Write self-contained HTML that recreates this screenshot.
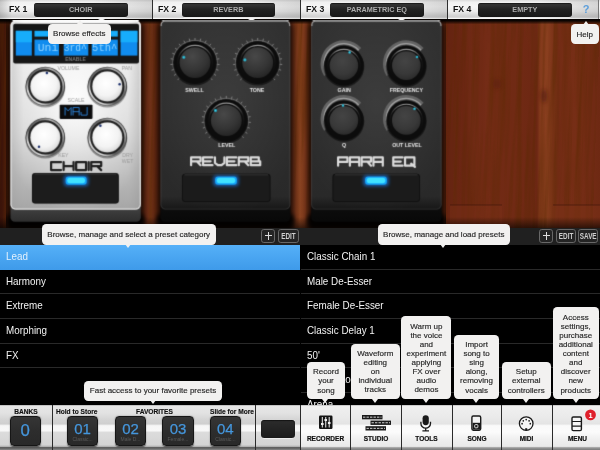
<!DOCTYPE html>
<html><head><meta charset="utf-8">
<style>
*{box-sizing:border-box;margin:0;padding:0}
html,body{width:600px;height:450px;overflow:hidden;background:#000;font-family:"Liberation Sans",sans-serif}
.a{position:absolute}
#wrap{position:absolute;left:0;top:0;width:600px;height:450px;overflow:hidden;will-change:transform;transform:translateZ(0)}
#wood{left:0;top:18px;width:600px;height:210px}
/* top bar */
#top{left:0;top:0;width:600px;height:18.6px;background:linear-gradient(180deg,#dcdcdc 0,#f1f1f1 12%,#f6f6f6 35%,#ececec 60%,#d6d6d6 80%,#cfcfcf 91%,#f4f4f4 95%,#fafafa 100%)}
.sec{top:0;height:18.6px;width:148px;background:linear-gradient(90deg,rgba(0,0,0,0) 0,rgba(0,0,0,0) 60%,rgba(0,0,0,.13) 100%);border-right:1px solid #2e2e2e}
.fx{top:4.3px;font-size:9.1px;transform:scaleX(.955);transform-origin:0 0;font-weight:700;color:#111;line-height:10px;white-space:nowrap}
.fxb{top:2.9px;height:13.8px;width:93.6px;border-radius:3px;background:linear-gradient(180deg,#3a3a3a 0,#222 45%,#181818 100%);color:#adadad;font-size:7.25px;font-weight:700;text-align:center;line-height:13.6px;box-shadow:0 .5px 0 rgba(255,255,255,.8),inset 0 .5px 1px #000}
.nt{top:18.2px;width:7px;height:2px;background:#f4f4f4;border-radius:0 0 2px 2px}
/* tooltips */
.tip{background:#f2f1f0;border-radius:4.2px;color:#262626;font-size:8px;line-height:9.1px;text-align:center;padding:5.6px 0 4.4px;-webkit-text-stroke:.15px #262626;white-space:nowrap}
.ar{width:0;height:0;border-left:3.5px solid transparent;border-right:3.5px solid transparent}
.ard{border-top:4px solid #f2f1f0}
.aru{border-bottom:4px solid #f2f1f0}
/* mid bar */
#mid{left:0;top:227.6px;width:600px;height:17.4px;background:#202020}
.mb{top:229px;height:13.8px;border:1px solid #686868;border-radius:2.8px;color:#cfcfcf;font-size:8.4px;font-weight:700;text-align:center;line-height:12.6px;background:#242424}
.mb span{position:absolute;left:-10px;right:-10px;top:0;transform:scaleX(.76);transform-origin:50% 50%}
.mb i{position:absolute;background:#dcdcdc}
/* lists */
.row{height:24.65px;border-bottom:1px solid #292929;color:#f2f2f2;font-size:10.1px;line-height:24.4px;padding-left:6px;white-space:nowrap}
.row span{display:inline-block;transform:scaleX(.975);transform-origin:0 50%}
/* bottom */
#bl{left:0;top:404.6px;width:300.5px;height:45.4px;background:linear-gradient(180deg,#a8a8a8 0,#e6e6e6 2.5%,#e2e2e2 18%,#d3d3d3 34%,#cfcfcf 42%,#f6f6f6 46%,#f8f8f8 57%,#dcdcdc 61%,#d4d4d4 88%,#bdbdbd 92%,#5e5e5e 94%,#6a6a6a 97%,#8c8c8c 100%)}
#br{left:300.5px;top:404.6px;width:299.5px;height:45.4px;background:linear-gradient(180deg,#b0b0b0 0,#f0f0f0 2.5%,#ebebeb 25%,#e4e4e4 42%,#fafafa 46%,#fbfbfb 60%,#f0f0f0 75%,#e9e9e9 92%,#9a9a9a 95%,#7a7a7a 100%)}
.bt{font-size:6.6px;font-weight:700;color:#111;-webkit-text-stroke:.15px #111;white-space:nowrap;line-height:8px;top:408px}
.pb{top:416px;width:31.4px;height:29.6px;border-radius:4px;background:linear-gradient(180deg,#353535 0,#2d2d2d 50%,#292929 100%);border:.8px solid #161616;box-shadow:0 .8px 1.2px rgba(0,0,0,.6);color:#4596dc;font-size:15px;text-align:center;line-height:24.5px;-webkit-text-stroke:.25px #4596dc}
.pb small{display:block;font-size:5px;color:#5a5a5a;line-height:5px;margin-top:-4.3px;font-weight:400;-webkit-text-stroke:0}
.tl{top:434.6px;width:50px;text-align:center;font-size:6.5px;font-weight:700;color:#111;line-height:8px;-webkit-text-stroke:.2px #111}
.vd{top:404.5px;width:1px;height:45.5px;background:#2a2a2a}
</style></head><body><div id="wrap">
<svg class="a" id="wood" width="600" height="210" viewBox="0 18 600 210">
<defs>
<linearGradient id="wg" x1="0" y1="0" x2="600" y2="0" gradientUnits="userSpaceOnUse">
<stop offset="0" stop-color="#3c1609"/><stop offset=".015" stop-color="#4e1d0c"/><stop offset=".233" stop-color="#702b13"/><stop offset=".251" stop-color="#7e3b1d"/><stop offset=".268" stop-color="#6f2a12"/>
<stop offset=".483" stop-color="#7a3216"/><stop offset=".5" stop-color="#9a4f25"/><stop offset=".519" stop-color="#7e3417"/>
<stop offset=".74" stop-color="#6c2811"/><stop offset=".76" stop-color="#742c14"/><stop offset=".81" stop-color="#7f3217"/><stop offset=".86" stop-color="#7d3116"/><stop offset=".895" stop-color="#782e15"/>
<stop offset=".9" stop-color="#93441f"/><stop offset=".912" stop-color="#9b4a23"/><stop offset=".922" stop-color="#8a3c1b"/><stop offset=".93" stop-color="#803417"/><stop offset=".96" stop-color="#843618"/><stop offset="1" stop-color="#7a3015"/>
</linearGradient>
<filter id="grain" x="0" y="0" width="100%" height="100%"><feTurbulence type="fractalNoise" baseFrequency=".22 .007" numOctaves="3" seed="7"/><feColorMatrix values="0 0 0 0 .12  0 0 0 0 .03  0 0 0 0 0  1.6 0 0 0 -.62"/></filter>
<filter id="grain2" x="0" y="0" width="100%" height="100%"><feTurbulence type="fractalNoise" baseFrequency=".05 .004" numOctaves="2" seed="3"/><feColorMatrix values="0 0 0 0 .75  0 0 0 0 .35  0 0 0 0 .12  1.2 0 0 0 -.62"/></filter>
<linearGradient id="tsh" x1="0" y1="0" x2="0" y2="1"><stop offset="0" stop-color="#050201" stop-opacity="1"/><stop offset=".42" stop-color="#050201" stop-opacity=".95"/><stop offset="1" stop-color="#000" stop-opacity="0"/></linearGradient>
<filter id="wb" x="-50%" y="-50%" width="200%" height="200%"><feGaussianBlur stdDeviation="2"/></filter>
</defs>
<rect x="0" y="18" width="600" height="210" fill="url(#wg)"/>
<rect x="0" y="18" width="600" height="210" filter="url(#grain)" opacity=".8" transform="skewX(-2)"/>
<rect x="0" y="18" width="600" height="210" filter="url(#grain2)" opacity=".08"/>
<!-- lighter lower planks -->
<rect x="450" y="205" width="52" height="23" fill="#8a3a1b" opacity=".4"/><rect x="553" y="205" width="47" height="23" fill="#8c3c1c" opacity=".4"/>
<path d="M450,205H502M553,205H600" stroke="#3a1407" stroke-width=".8" opacity=".7"/>
<ellipse cx="544" cy="96" rx="3" ry="7" fill="#4a180a" opacity=".55" filter="url(#wb)"/>
<ellipse cx="497" cy="84" rx="4" ry="5" fill="#5a1f0d" opacity=".4" filter="url(#wb)"/>
<rect x="0" y="18" width="600" height="210" fill="#30060a" opacity=".16"/>
<rect x="0" y="18" width="600" height="6.4" fill="url(#tsh)"/>
<linearGradient id="bsh" x1="0" y1="0" x2="0" y2="1"><stop offset="0" stop-color="#000" stop-opacity="0"/><stop offset="1" stop-color="#000" stop-opacity=".6"/></linearGradient><rect x="0" y="217" width="600" height="11" fill="url(#bsh)"/>
</svg>
<div class="a" id="top"></div><div class="a sec" style="left:4.9px"></div><div class="a sec" style="left:152.9px"></div><div class="a sec" style="left:300.9px;width:147.6px"></div><div class="a sec" style="left:448.5px;width:150.3px;border-right-color:#777"></div><div class="a" style="left:0;top:0;width:12px;height:18.6px;background:linear-gradient(90deg,rgba(0,0,0,.18),rgba(0,0,0,0))"></div>
<div class="a fx" style="left:8.5px">FX 1</div><div class="a fxb" style="left:34px">CHOIR</div>
<div class="a fx" style="left:157.7px">FX 2</div><div class="a fxb" style="left:181.5px">REVERB</div>
<div class="a fx" style="left:305.7px">FX 3</div><div class="a fxb" style="left:330px">PARAMETRIC EQ</div>
<div class="a fx" style="left:453.3px">FX 4</div><div class="a fxb" style="left:478px">EMPTY</div>
<div class="a" style="left:581px;top:2.5px;width:10px;text-align:center;font-size:11px;font-weight:700;color:#5b9edb;line-height:13px">?</div>


<div id="pedals"><svg class="a" style="left:0;top:19px" width="600" height="209" viewBox="0 19 600 209">
<defs>
<linearGradient id="silv" x1="0" y1="0" x2="0" y2="1"><stop offset="0" stop-color="#f4f4f4"/><stop offset=".25" stop-color="#e6e6e6"/><stop offset=".6" stop-color="#d2d2d2"/><stop offset=".85" stop-color="#b6b6b6"/><stop offset="1" stop-color="#a6a6a6"/></linearGradient>
<radialGradient id="silvh" cx=".5" cy=".42" r=".6"><stop offset="0" stop-color="#fff" stop-opacity=".95"/><stop offset=".55" stop-color="#fff" stop-opacity=".35"/><stop offset="1" stop-color="#fff" stop-opacity="0"/></radialGradient>
<linearGradient id="silvside" x1="0" y1="0" x2="1" y2="0"><stop offset="0" stop-color="#999" stop-opacity=".3"/><stop offset=".1" stop-color="#999" stop-opacity="0"/><stop offset=".9" stop-color="#999" stop-opacity="0"/><stop offset="1" stop-color="#888" stop-opacity=".3"/></linearGradient>
<linearGradient id="dk" x1="0" y1="0" x2="0" y2="1"><stop offset="0" stop-color="#313131"/><stop offset=".5" stop-color="#2d2d2d"/><stop offset=".93" stop-color="#292929"/><stop offset="1" stop-color="#161616"/></linearGradient>
<radialGradient id="dkh" cx=".5" cy=".45" r=".6"><stop offset="0" stop-color="#fff" stop-opacity=".07"/><stop offset="1" stop-color="#fff" stop-opacity="0"/></radialGradient>
<linearGradient id="base" x1="0" y1="0" x2="0" y2="1"><stop offset="0" stop-color="#5a5a5a"/><stop offset=".25" stop-color="#444"/><stop offset="1" stop-color="#2e2e2e"/></linearGradient>
<linearGradient id="based" x1="0" y1="0" x2="0" y2="1"><stop offset="0" stop-color="#141414"/><stop offset=".5" stop-color="#0b0b0b"/><stop offset="1" stop-color="#080808"/></linearGradient>
<radialGradient id="led" cx=".5" cy=".5" r=".5" gradientTransform="translate(.5 .5) scale(1 .55) translate(-.5 -.5)"><stop offset="0" stop-color="#3fe4ff"/><stop offset=".6" stop-color="#16b4fb"/><stop offset="1" stop-color="#0b78e4"/></radialGradient>
<filter id="glow" x="-30%" y="-80%" width="160%" height="260%"><feGaussianBlur stdDeviation="1.6"/></filter>
<filter id="soft" x="0" y="0" width="100%" height="100%" color-interpolation-filters="sRGB"><feConvolveMatrix order="3" kernelMatrix="0.0169 0.0962 0.0169 0.0962 0.5476 0.0962 0.0169 0.0962 0.0169" edgeMode="duplicate" preserveAlpha="false"/></filter>
<filter id="b1" x="-20%" y="-20%" width="140%" height="140%"><feGaussianBlur stdDeviation=".5"/></filter>
<filter id="b2" x="-20%" y="-20%" width="140%" height="140%"><feGaussianBlur stdDeviation="2.2"/></filter>
<filter id="b3" x="-20%" y="-20%" width="140%" height="140%"><feGaussianBlur stdDeviation="3.2"/></filter>
<radialGradient id="wk" cx=".45" cy=".4" r=".6"><stop offset="0" stop-color="#fff"/><stop offset=".7" stop-color="#f3f3f3"/><stop offset="1" stop-color="#dcdcdc"/></radialGradient>
<linearGradient id="chr" x1="1" y1="0" x2="0" y2="1"><stop offset="0" stop-color="#5a5a5a"/><stop offset=".2" stop-color="#b4b4b4"/><stop offset=".36" stop-color="#6a6a6a"/><stop offset=".62" stop-color="#585858"/><stop offset=".8" stop-color="#e0e0e0"/><stop offset="1" stop-color="#6a6a6a"/></linearGradient>
<linearGradient id="chr2" x1="0" y1="0" x2="0" y2="1"><stop offset="0" stop-color="#4a4a4a"/><stop offset=".5" stop-color="#2e2e2e"/><stop offset="1" stop-color="#6a6a6a"/></linearGradient>
<radialGradient id="cap" cx=".42" cy=".3" r=".78"><stop offset="0" stop-color="#484848"/><stop offset=".6" stop-color="#343434"/><stop offset="1" stop-color="#202020"/></radialGradient>
<linearGradient id="rim" x1="0" y1="0" x2="0" y2="1"><stop offset="0" stop-color="#9a9a9a"/><stop offset=".35" stop-color="#333" stop-opacity=".3"/><stop offset="1" stop-color="#000" stop-opacity="0"/></linearGradient>
<radialGradient id="cap2" cx=".45" cy=".35" r=".75"><stop offset="0" stop-color="#444"/><stop offset=".6" stop-color="#383838"/><stop offset="1" stop-color="#262626"/></radialGradient>
<radialGradient id="bd" cx=".5" cy=".5" r=".5"><stop offset="0" stop-color="#4fd4e6"/><stop offset=".5" stop-color="#22a4be"/><stop offset="1" stop-color="#22a4be" stop-opacity="0"/></radialGradient>
</defs><g filter="url(#soft)">
<rect x="8.0" y="21" width="135.3" height="204" rx="6" fill="#000" opacity=".9" filter="url(#b3)"/>
<rect x="6.5" y="214" width="138.3" height="16" rx="5" fill="#000" opacity=".9" filter="url(#b2)"/>
<rect x="158.0" y="21" width="134.8" height="204" rx="6" fill="#000" opacity=".9" filter="url(#b3)"/>
<rect x="156.5" y="214" width="137.8" height="16" rx="5" fill="#000" opacity=".9" filter="url(#b2)"/>
<rect x="308.7" y="21" width="135.40000000000003" height="204" rx="6" fill="#000" opacity=".9" filter="url(#b3)"/>
<rect x="307.2" y="214" width="138.40000000000003" height="16" rx="5" fill="#000" opacity=".9" filter="url(#b2)"/>
<rect x="10.5" y="200" width="130.3" height="21.7" rx="4.5" fill="url(#base)"/>
<rect x="10.5" y="20.6" width="130.3" height="189" rx="5" fill="url(#silv)"/>
<rect x="10.5" y="20.6" width="130.3" height="189" rx="5" fill="url(#silvh)"/>
<rect x="10.5" y="20.6" width="130.3" height="189" rx="5" fill="url(#silvside)"/>
<rect x="11.0" y="21.1" width="129.3" height="188" rx="4.6" fill="none" stroke="#fff" stroke-opacity=".85" stroke-width="1"/>
<rect x="13.2" y="23.8" width="125.8" height="39.7" rx="2" fill="#161616"/>
<rect x="15.8" y="30.8" width="16.0" height="24.8" fill="#108cee"/>
<rect x="15.8" y="30.8" width="16.0" height="11.5" fill="#17adfb"/>
<rect x="34.5" y="30.8" width="24.5" height="5.8" fill="#17adfb"/>
<rect x="34.5" y="39.6" width="24.5" height="16" fill="#108cee"/>
<rect x="63.7" y="30.8" width="24.599999999999994" height="5.8" fill="#17adfb"/>
<rect x="63.7" y="39.6" width="24.599999999999994" height="16" fill="#108cee"/>
<rect x="91.7" y="30.8" width="26.099999999999994" height="5.8" fill="#17adfb"/>
<rect x="91.7" y="39.6" width="26.099999999999994" height="16" fill="#108cee"/>
<rect x="120.6" y="30.8" width="16.80000000000001" height="24.8" fill="#108cee"/>
<rect x="120.6" y="30.8" width="16.80000000000001" height="11.5" fill="#17adfb"/>
<g font-family="Liberation Mono" font-size="10.6" fill="#8dd2ff" text-anchor="middle"><text x="48" y="51.4" textLength="20.5" lengthAdjust="spacingAndGlyphs">Uni</text><text x="75.2" y="51.4" textLength="23" lengthAdjust="spacingAndGlyphs">3rd^</text><text x="104.7" y="51.4" textLength="25.2" lengthAdjust="spacingAndGlyphs">5th^</text></g>
<text x="75.5" y="61" font-family="Liberation Sans" font-size="5" font-weight="700" fill="#7d7d7d" text-anchor="middle">ENABLE</text>
<text x="68.4" y="70.2" font-family="Liberation Sans" font-size="5.2" font-weight="400" fill="#9a9a9a" text-anchor="middle">VOLUME</text>
<text x="126.8" y="70.2" font-family="Liberation Sans" font-size="5.2" font-weight="400" fill="#9a9a9a" text-anchor="middle">PAN</text>
<text x="76" y="101.8" font-family="Liberation Sans" font-size="5.2" font-weight="400" fill="#9a9a9a" text-anchor="middle">SCALE</text>
<text x="63.4" y="157.3" font-family="Liberation Sans" font-size="5.2" font-weight="400" fill="#9a9a9a" text-anchor="middle">KEY</text>
<text x="127.6" y="157.3" font-family="Liberation Sans" font-size="5.2" font-weight="400" fill="#9a9a9a" text-anchor="middle">DRY</text>
<text x="127.6" y="163.2" font-family="Liberation Sans" font-size="5.2" font-weight="400" fill="#9a9a9a" text-anchor="middle">WET</text>
<rect x="59.7" y="104.7" width="32.8" height="14.2" rx=".8" fill="#0b0b0c"/>
<g fill="none" stroke="#2b7ed2" stroke-width="0.95" stroke-linejoin="round" stroke-linecap="round" vector-effect="non-scaling-stroke"><path vector-effect="non-scaling-stroke" transform="translate(65.07,107.47) scale(0.606,0.765)" d="M0,10V0L5,4.5L10,0V10"/><path vector-effect="non-scaling-stroke" transform="translate(73.07,107.47) scale(0.606,0.765)" d="M0,10V0H10V10M0,5.5H10"/><path vector-effect="non-scaling-stroke" transform="translate(81.07,107.47) scale(0.606,0.765)" d="M10,0V10H0V6.5"/></g>
<circle cx="45.3" cy="87.60000000000001" r="20" fill="#000" opacity=".35" filter="url(#b1)"/><circle cx="45.3" cy="86.4" r="19.7" fill="url(#chr2)"/><circle cx="45.3" cy="86.4" r="18.9" fill="url(#chr)"/><circle cx="45.3" cy="86.4" r="17.1" fill="#1e1e1e"/><circle cx="45.3" cy="86.4" r="15.5" fill="#444"/><circle cx="45.3" cy="86.4" r="14.9" fill="url(#wk)"/><circle cx="46.9" cy="72.9" r="1.25" fill="#1b2f6b"/>
<circle cx="107.3" cy="87.60000000000001" r="20" fill="#000" opacity=".35" filter="url(#b1)"/><circle cx="107.3" cy="86.4" r="19.7" fill="url(#chr2)"/><circle cx="107.3" cy="86.4" r="18.9" fill="url(#chr)"/><circle cx="107.3" cy="86.4" r="17.1" fill="#1e1e1e"/><circle cx="107.3" cy="86.4" r="15.5" fill="#444"/><circle cx="107.3" cy="86.4" r="14.9" fill="url(#wk)"/><circle cx="119.6" cy="84.2" r="1.25" fill="#1b2f6b"/>
<circle cx="45.3" cy="138.6" r="20" fill="#000" opacity=".35" filter="url(#b1)"/><circle cx="45.3" cy="137.4" r="19.7" fill="url(#chr2)"/><circle cx="45.3" cy="137.4" r="18.9" fill="url(#chr)"/><circle cx="45.3" cy="137.4" r="17.1" fill="#1e1e1e"/><circle cx="45.3" cy="137.4" r="15.5" fill="#444"/><circle cx="45.3" cy="137.4" r="14.9" fill="url(#wk)"/><circle cx="39" cy="146.7" r="1.25" fill="#1b2f6b"/>
<circle cx="107.3" cy="138.6" r="20" fill="#000" opacity=".35" filter="url(#b1)"/><circle cx="107.3" cy="137.4" r="19.7" fill="url(#chr2)"/><circle cx="107.3" cy="137.4" r="18.9" fill="url(#chr)"/><circle cx="107.3" cy="137.4" r="17.1" fill="#1e1e1e"/><circle cx="107.3" cy="137.4" r="15.5" fill="#444"/><circle cx="107.3" cy="137.4" r="14.9" fill="url(#wk)"/><circle cx="100.4" cy="125.8" r="1.25" fill="#1b2f6b"/>
<g fill="none" stroke="#1e1e1e" stroke-width="2.2" stroke-linejoin="round" stroke-linecap="round" vector-effect="non-scaling-stroke"><path vector-effect="non-scaling-stroke" transform="translate(51.10,162.10) scale(0.994,0.800)" d="M10,0H0V10H10"/><path vector-effect="non-scaling-stroke" transform="translate(63.62,162.10) scale(0.994,0.800)" d="M0,0V10M10,0V10M0,5H10"/><path vector-effect="non-scaling-stroke" transform="translate(76.15,162.10) scale(0.994,0.800)" d="M0,0H10V10H0Z"/><path vector-effect="non-scaling-stroke" transform="translate(88.68,162.10) scale(0.994,0.800)" d="M0,0V10"/><path vector-effect="non-scaling-stroke" transform="translate(91.26,162.10) scale(0.994,0.800)" d="M0,10V0H10V5H0M6,5L10,10"/></g>
<rect x="32" y="173" width="86.8" height="30.5" rx="3" fill="#1c1c1c"/><rect x="32.4" y="173.4" width="86.0" height="29.7" rx="2.8" fill="none" stroke="#000" stroke-opacity=".5" stroke-width=".8"/><path d="M34.5,174.1H116.3" stroke="#fff" stroke-opacity=".13" stroke-width="1"/><rect x="63.5" y="175" width="25.299999999999997" height="11.4" rx="4" fill="#1277e6" opacity=".6" filter="url(#glow)"/><rect x="65.6" y="176.6" width="21.099999999999998" height="8.2" rx="3" fill="#14a2f8" filter="url(#b1)"/><rect x="67.2" y="177.8" width="17.9" height="5.4" rx="2.6" fill="#3fe2ff" filter="url(#b1)"/>
<rect x="160.5" y="200" width="129.8" height="21.7" rx="4.5" fill="url(#based)"/><rect x="160.5" y="20.6" width="129.8" height="189" rx="5" fill="url(#dk)"/><rect x="160.5" y="20.6" width="129.8" height="189" rx="5" fill="url(#dkh)"/><rect x="160.9" y="21" width="129.0" height="188.2" rx="4.7" fill="none" stroke="#fff" stroke-opacity=".13" stroke-width=".8"/><path d="M161.2,26V24.6a3.4,3.4 0 0 1 3.4,-3.4H286.2a3.4,3.4 0 0 1 3.4,3.4V26" stroke="#ddd" stroke-opacity=".6" stroke-width="1.2" fill="none"/>
<path d="M179.80,77.80L177.61,79.99M176.67,73.83L174.03,75.45M174.55,69.24L171.60,70.20M173.57,64.29L170.48,64.53M173.76,59.24L170.70,58.75M175.14,54.37L172.27,53.19M177.61,49.96L175.10,48.14M181.04,46.25L179.02,43.89M185.24,43.44L183.83,40.68M189.98,41.69L189.26,38.68M195.00,41.10L195.00,38.00M200.02,41.69L200.74,38.68M204.76,43.44L206.17,40.68M208.96,46.25L210.98,43.89M212.39,49.96L214.90,48.14M214.86,54.37L217.73,53.19M216.24,59.24L219.30,58.75M216.43,64.29L219.52,64.53M215.45,69.24L218.40,70.20M213.33,73.83L215.97,75.45M210.20,77.80L212.39,79.99" stroke="#8c8c8c" stroke-width=".85" fill="none"/><path d="M179.23,78.37A22.3,22.3 0 1 1 210.77,78.37" stroke="#6a6a6a" stroke-width=".9" fill="none"/><circle cx="195" cy="63.6" r="22" fill="#000" opacity=".5" filter="url(#b1)"/><circle cx="195" cy="62.6" r="21.3" fill="#0c0c0c"/><circle cx="195" cy="62.6" r="17.3" fill="none" stroke="url(#rim)" stroke-width="1.3"/><circle cx="195" cy="62.6" r="15.4" fill="url(#cap)"/><circle cx="183.8" cy="57.3" r="2.1" fill="url(#bd)"/>
<path d="M242.50,77.80L240.31,79.99M239.37,73.83L236.73,75.45M237.25,69.24L234.30,70.20M236.27,64.29L233.18,64.53M236.46,59.24L233.40,58.75M237.84,54.37L234.97,53.19M240.31,49.96L237.80,48.14M243.74,46.25L241.72,43.89M247.94,43.44L246.53,40.68M252.68,41.69L251.96,38.68M257.70,41.10L257.70,38.00M262.72,41.69L263.44,38.68M267.46,43.44L268.87,40.68M271.66,46.25L273.68,43.89M275.09,49.96L277.60,48.14M277.56,54.37L280.43,53.19M278.94,59.24L282.00,58.75M279.13,64.29L282.22,64.53M278.15,69.24L281.10,70.20M276.03,73.83L278.67,75.45M272.90,77.80L275.09,79.99" stroke="#8c8c8c" stroke-width=".85" fill="none"/><path d="M241.93,78.37A22.3,22.3 0 1 1 273.47,78.37" stroke="#6a6a6a" stroke-width=".9" fill="none"/><circle cx="257.7" cy="63.6" r="22" fill="#000" opacity=".5" filter="url(#b1)"/><circle cx="257.7" cy="62.6" r="21.3" fill="#0c0c0c"/><circle cx="257.7" cy="62.6" r="17.3" fill="none" stroke="url(#rim)" stroke-width="1.3"/><circle cx="257.7" cy="62.6" r="15.4" fill="url(#cap)"/><circle cx="244.9" cy="59.9" r="2.1" fill="url(#bd)"/>
<path d="M211.10,135.70L208.91,137.89M207.97,131.73L205.33,133.35M205.85,127.14L202.90,128.10M204.87,122.19L201.78,122.43M205.06,117.14L202.00,116.65M206.44,112.27L203.57,111.09M208.91,107.86L206.40,106.04M212.34,104.15L210.32,101.79M216.54,101.34L215.13,98.58M221.28,99.59L220.56,96.58M226.30,99.00L226.30,95.90M231.32,99.59L232.04,96.58M236.06,101.34L237.47,98.58M240.26,104.15L242.28,101.79M243.69,107.86L246.20,106.04M246.16,112.27L249.03,111.09M247.54,117.14L250.60,116.65M247.73,122.19L250.82,122.43M246.75,127.14L249.70,128.10M244.63,131.73L247.27,133.35M241.50,135.70L243.69,137.89" stroke="#8c8c8c" stroke-width=".85" fill="none"/><path d="M210.53,136.27A22.3,22.3 0 1 1 242.07,136.27" stroke="#6a6a6a" stroke-width=".9" fill="none"/><circle cx="226.3" cy="121.5" r="22" fill="#000" opacity=".5" filter="url(#b1)"/><circle cx="226.3" cy="120.5" r="21.3" fill="#0c0c0c"/><circle cx="226.3" cy="120.5" r="17.3" fill="none" stroke="url(#rim)" stroke-width="1.3"/><circle cx="226.3" cy="120.5" r="15.4" fill="url(#cap)"/><circle cx="215.5" cy="110.5" r="2.1" fill="url(#bd)"/>
<text x="194.5" y="91.5" font-family="Liberation Sans" font-size="5.3" font-weight="700" fill="#e6e6e6" text-anchor="middle">SWELL</text>
<text x="257" y="91.5" font-family="Liberation Sans" font-size="5.3" font-weight="700" fill="#e6e6e6" text-anchor="middle">TONE</text>
<text x="226.7" y="147.3" font-family="Liberation Sans" font-size="5.3" font-weight="700" fill="#e6e6e6" text-anchor="middle">LEVEL</text>
<g fill="none" stroke="#dcdcdc" stroke-width="2.2" stroke-linejoin="round" stroke-linecap="round" vector-effect="non-scaling-stroke"><path vector-effect="non-scaling-stroke" transform="translate(191.10,157.40) scale(0.947,0.780)" d="M0,10V0H10V5H0M6,5L10,10"/><path vector-effect="non-scaling-stroke" transform="translate(203.03,157.40) scale(0.947,0.780)" d="M10,0H0V10H10M0,5H8"/><path vector-effect="non-scaling-stroke" transform="translate(214.95,157.40) scale(0.947,0.780)" d="M0,0V7L3,10H7L10,7V0"/><path vector-effect="non-scaling-stroke" transform="translate(226.88,157.40) scale(0.947,0.780)" d="M10,0H0V10H10M0,5H8"/><path vector-effect="non-scaling-stroke" transform="translate(238.81,157.40) scale(0.947,0.780)" d="M0,10V0H10V5H0M6,5L10,10"/><path vector-effect="non-scaling-stroke" transform="translate(250.73,157.40) scale(0.947,0.780)" d="M0,0H8.5V5M0,5H10V10H0V0"/></g>
<rect x="182" y="173.7" width="88.5" height="28.30000000000001" rx="3" fill="#1b1b1b"/><rect x="182.4" y="174.1" width="87.7" height="27.50000000000001" rx="2.8" fill="none" stroke="#000" stroke-opacity=".5" stroke-width=".8"/><path d="M184.5,174.79999999999998H268.0" stroke="#fff" stroke-opacity=".13" stroke-width="1"/><rect x="213.0" y="175" width="26.0" height="11.4" rx="4" fill="#1277e6" opacity=".6" filter="url(#glow)"/><rect x="215.1" y="176.6" width="21.8" height="8.2" rx="3" fill="#14a2f8" filter="url(#b1)"/><rect x="216.7" y="177.8" width="18.6" height="5.4" rx="2.6" fill="#3fe2ff" filter="url(#b1)"/>
<rect x="311.2" y="200" width="130.40000000000003" height="21.7" rx="4.5" fill="url(#based)"/><rect x="311.2" y="20.6" width="130.40000000000003" height="189" rx="5" fill="url(#dk)"/><rect x="311.2" y="20.6" width="130.40000000000003" height="189" rx="5" fill="url(#dkh)"/><rect x="311.59999999999997" y="21" width="129.60000000000002" height="188.2" rx="4.7" fill="none" stroke="#fff" stroke-opacity=".13" stroke-width=".8"/><path d="M311.9,26V24.6a3.4,3.4 0 0 1 3.4,-3.4H437.5a3.4,3.4 0 0 1 3.4,3.4V26" stroke="#ddd" stroke-opacity=".6" stroke-width="1.2" fill="none"/>
<path d="M326.09,74.73A21,21 0 0 1 359.51,49.55" stroke="#646464" stroke-width="4.6" fill="none"/><path d="M325.86,72.01A19.9,19.9 0 0 1 358.69,50.28" stroke="#a2a2a2" stroke-width="1.3" fill="none"/><circle cx="343.9" cy="66.6" r="20.4" fill="#000" opacity=".5" filter="url(#b1)"/><circle cx="343.9" cy="65.6" r="19.8" fill="#0c0c0c"/><circle cx="343.9" cy="65.6" r="16.2" fill="none" stroke="url(#rim)" stroke-width="1.1"/><circle cx="343.9" cy="65.6" r="14.3" fill="url(#cap2)"/><circle cx="349.6" cy="52.4" r="1.8" fill="url(#bd)"/>
<path d="M388.49,74.73A21,21 0 0 1 421.91,49.55" stroke="#646464" stroke-width="4.6" fill="none"/><path d="M388.26,72.01A19.9,19.9 0 0 1 421.09,50.28" stroke="#a2a2a2" stroke-width="1.3" fill="none"/><circle cx="406.3" cy="66.6" r="20.4" fill="#000" opacity=".5" filter="url(#b1)"/><circle cx="406.3" cy="65.6" r="19.8" fill="#0c0c0c"/><circle cx="406.3" cy="65.6" r="16.2" fill="none" stroke="url(#rim)" stroke-width="1.1"/><circle cx="406.3" cy="65.6" r="14.3" fill="url(#cap2)"/><circle cx="417" cy="57" r="1.8" fill="url(#bd)"/>
<path d="M326.09,129.53A21,21 0 0 1 359.51,104.35" stroke="#646464" stroke-width="4.6" fill="none"/><path d="M325.86,126.81A19.9,19.9 0 0 1 358.69,105.08" stroke="#a2a2a2" stroke-width="1.3" fill="none"/><circle cx="343.9" cy="121.4" r="20.4" fill="#000" opacity=".5" filter="url(#b1)"/><circle cx="343.9" cy="120.4" r="19.8" fill="#0c0c0c"/><circle cx="343.9" cy="120.4" r="16.2" fill="none" stroke="url(#rim)" stroke-width="1.1"/><circle cx="343.9" cy="120.4" r="14.3" fill="url(#cap2)"/><circle cx="343" cy="105.5" r="1.8" fill="url(#bd)"/>
<path d="M388.49,129.53A21,21 0 0 1 421.91,104.35" stroke="#646464" stroke-width="4.6" fill="none"/><path d="M388.26,126.81A19.9,19.9 0 0 1 421.09,105.08" stroke="#a2a2a2" stroke-width="1.3" fill="none"/><circle cx="406.3" cy="121.4" r="20.4" fill="#000" opacity=".5" filter="url(#b1)"/><circle cx="406.3" cy="120.4" r="19.8" fill="#0c0c0c"/><circle cx="406.3" cy="120.4" r="16.2" fill="none" stroke="url(#rim)" stroke-width="1.1"/><circle cx="406.3" cy="120.4" r="14.3" fill="url(#cap2)"/><circle cx="414.5" cy="108.8" r="1.8" fill="url(#bd)"/>
<text x="344.2" y="91.6" font-family="Liberation Sans" font-size="5.3" font-weight="700" fill="#e6e6e6" text-anchor="middle">GAIN</text>
<text x="406.3" y="91.6" font-family="Liberation Sans" font-size="5.3" font-weight="700" fill="#e6e6e6" text-anchor="middle">FREQUENCY</text>
<text x="344" y="147.3" font-family="Liberation Sans" font-size="5.3" font-weight="700" fill="#e6e6e6" text-anchor="middle">Q</text>
<text x="407" y="147.3" font-family="Liberation Sans" font-size="5.3" font-weight="700" fill="#e6e6e6" text-anchor="middle">OUT LEVEL</text>
<g fill="none" stroke="#dcdcdc" stroke-width="2.2" stroke-linejoin="round" stroke-linecap="round" vector-effect="non-scaling-stroke"><path vector-effect="non-scaling-stroke" transform="translate(338.10,157.40) scale(0.935,0.830)" d="M0,10V0H10V5.5H0"/><path vector-effect="non-scaling-stroke" transform="translate(349.88,157.40) scale(0.935,0.830)" d="M0,10V0H10V10M0,5.5H10"/><path vector-effect="non-scaling-stroke" transform="translate(361.66,157.40) scale(0.935,0.830)" d="M0,10V0H10V5H0M6,5L10,10"/><path vector-effect="non-scaling-stroke" transform="translate(373.44,157.40) scale(0.935,0.830)" d="M0,10V0H10V10M0,5.5H10"/><path vector-effect="non-scaling-stroke" transform="translate(393.27,157.40) scale(0.935,0.830)" d="M10,0H0V10H10M0,5H8"/><path vector-effect="non-scaling-stroke" transform="translate(405.05,157.40) scale(0.935,0.830)" d="M0,0H10V10H0ZM6.5,7.5L10.5,11.5"/></g>
<rect x="332.5" y="173.7" width="87.5" height="28.30000000000001" rx="3" fill="#1b1b1b"/><rect x="332.9" y="174.1" width="86.7" height="27.50000000000001" rx="2.8" fill="none" stroke="#000" stroke-opacity=".5" stroke-width=".8"/><path d="M335.0,174.79999999999998H417.5" stroke="#fff" stroke-opacity=".13" stroke-width="1"/><rect x="363.0" y="175" width="26.0" height="11.4" rx="4" fill="#1277e6" opacity=".6" filter="url(#glow)"/><rect x="365.1" y="176.6" width="21.8" height="8.2" rx="3" fill="#14a2f8" filter="url(#b1)"/><rect x="366.7" y="177.8" width="18.6" height="5.4" rx="2.6" fill="#3fe2ff" filter="url(#b1)"/>
</g></svg></div><!--/pedals-->

<div class="a nt" style="left:97.5px"></div><div class="a nt" style="left:247.5px"></div><div class="a nt" style="left:397.5px"></div>
<div class="a" id="mid"></div>
<div class="a mb" style="left:261.2px;width:14.2px"><i style="left:2.5px;top:5.35px;width:7.4px;height:1.15px"></i><i style="left:5.6px;top:2.2px;width:1.15px;height:7.5px"></i></div>
<div class="a mb" style="left:278px;width:20.8px"><span>EDIT</span></div>
<div class="a mb" style="left:539px;width:14.2px"><i style="left:2.5px;top:5.35px;width:7.4px;height:1.15px"></i><i style="left:5.6px;top:2.2px;width:1.15px;height:7.5px"></i></div>
<div class="a mb" style="left:556.3px;width:20.2px"><span>EDIT</span></div>
<div class="a mb" style="left:578px;width:20.4px"><span>SAVE</span></div>

<!-- lists -->
<div class="a" style="left:0;top:245px;width:300.3px;height:160px;overflow:hidden">
 <div class="row" style="background:linear-gradient(180deg,#55b0f8 0,#3f9bea 100%);border-bottom-color:#3f9bea;color:rgba(255,255,255,.84)"><span>Lead</span></div>
 <div class="row"><span>Harmony</span></div><div class="row"><span>Extreme</span></div><div class="row"><span>Morphing</span></div><div class="row"><span>FX</span></div>
</div>
<div class="a" style="left:300.5px;top:245px;width:299.5px;height:160px;overflow:hidden">
 <div class="row"><span>Classic Chain 1</span></div><div class="row"><span>Male De-Esser</span></div><div class="row"><span>Female De-Esser</span></div><div class="row"><span>Classic Delay 1</span></div><div class="row"><span>50'</span></div><div class="row"><span>Bad Chaos</span></div><div class="row"><span>Arena</span></div>
</div>

<!-- bottom -->
<div class="a" id="bl"></div><div class="a" id="br"></div>
<div id="bottom">
<div class="a vd" style="left:51.5px"></div><div class="a vd" style="left:255px"></div>
<div class="a bt" style="left:4px;width:44px;text-align:center">BANKS</div>
<div class="a bt" style="left:56px">Hold to Store</div>
<div class="a bt" style="left:136px">FAVORITES</div>
<div class="a bt" style="left:210px">Slide for More</div>
<div class="a pb" style="left:9.6px;font-size:16.8px;line-height:27px">0</div>
<div class="a pb" style="left:66.9px">01<small>Classic...</small></div>
<div class="a pb" style="left:114.8px">02<small>Male D...</small></div>
<div class="a pb" style="left:162.3px">03<small>Female...</small></div>
<div class="a pb" style="left:209.7px">04<small>Classic...</small></div>
<div class="a" style="left:261px;top:420px;width:34px;height:18px;border-radius:3.5px;background:linear-gradient(180deg,#2c2c2c,#1b1b1b);box-shadow:0 .5px 0 #fff,inset 0 .5px 1px #000"></div>
<div class="a vd" style="left:300.3px"></div><div class="a vd" style="left:350px"></div><div class="a vd" style="left:401px"></div><div class="a vd" style="left:451.5px"></div><div class="a vd" style="left:501px"></div><div class="a vd" style="left:551.5px"></div>
<div class="a tl" style="left:300.5px">RECORDER</div>
<div class="a tl" style="left:351px">STUDIO</div>
<div class="a tl" style="left:401.5px">TOOLS</div>
<div class="a tl" style="left:452px">SONG</div>
<div class="a tl" style="left:501.5px">MIDI</div>
<div class="a tl" style="left:553.5px;width:48px">MENU</div>
<svg class="a" style="left:300px;top:404px" width="300" height="46" viewBox="300 404 300 46">
 <!-- recorder -->
 <rect x="319" y="415.5" width="13.5" height="13.5" rx="1.2" fill="#151515"/>
 <g stroke="#f0f0f0" stroke-width="1" fill="none"><path d="M322.3 417v10.5M325.75 417v10.5M329.2 417v10.5"/></g>
 <g fill="#f0f0f0"><rect x="321" y="423" width="2.6" height="2"/><rect x="324.45" y="419" width="2.6" height="2"/><rect x="327.9" y="422" width="2.6" height="2"/></g>
 <!-- studio -->
 <g fill="#1a1a1a"><rect x="362" y="415" width="20.5" height="4.3"/><rect x="370.5" y="420.6" width="20.5" height="4.3"/><rect x="365.5" y="426.2" width="20.5" height="4.3"/></g>
 <g stroke="#e8e8e8" stroke-width=".9" stroke-dasharray="2.4 1.1"><path d="M363 417.15h18.5M371.5 422.75h18.5M366.5 428.35h18.5"/></g>
 <!-- tools mic -->
 <rect x="422.6" y="415.2" width="6.2" height="10" rx="3.1" fill="#1a1a1a"/>
 <path d="M420.9 421.8v1.6a4.8 4.8 0 0 0 9.6 0v-1.6M425.7 428v2.6M422.4 430.8h6.6" stroke="#1a1a1a" stroke-width="1.3" fill="none"/>
 <!-- song ipod -->
 <rect x="471.9" y="416" width="8.8" height="14.2" rx="1.4" fill="#f4f4f4" stroke="#1a1a1a" stroke-width="1.4"/>
 <rect x="472.6" y="422.8" width="7.4" height="6.8" fill="#1a1a1a"/>
 <rect x="474.7" y="424.6" width="3.2" height="3.2" rx=".8" fill="none" stroke="#eee" stroke-width=".9"/>
 <!-- midi -->
 <circle cx="526.2" cy="423.6" r="6.8" fill="#f6f6f6" stroke="#1a1a1a" stroke-width="1.3"/>
 <g fill="#1a1a1a"><circle cx="522.1" cy="423.7" r=".85"/><circle cx="523.3" cy="420.8" r=".85"/><circle cx="526.2" cy="419.6" r=".85"/><circle cx="529.1" cy="420.8" r=".85"/><circle cx="530.3" cy="423.7" r=".85"/><rect x="525.2" y="428.2" width="2" height="2.2"/></g>
 <!-- menu -->
 <rect x="572" y="417" width="9.4" height="13.6" rx="1.3" fill="#f6f6f6" stroke="#1a1a1a" stroke-width="1.4"/>
 <path d="M572 421.5h9.4M572 426.1h9.4" stroke="#1a1a1a" stroke-width="1.2"/>
 <circle cx="590.5" cy="414.9" r="5.4" fill="#df1f2b"/>
 <text x="590.5" y="417.6" font-family="Liberation Sans" font-size="7.4" font-weight="700" fill="#fff" text-anchor="middle">1</text>
</svg>
</div>

<!-- tooltips -->
<div id="tips">
<div class="a tip" style="left:47.5px;top:24px;width:63.5px;height:20px;padding-top:5.4px">Browse effects</div><div class="a ar aru" style="left:76.5px;top:20.2px"></div>
<div class="a tip" style="left:570.7px;top:24.4px;width:28px;height:19.8px;padding-top:5.3px">Help</div><div class="a ar aru" style="left:583px;top:20.6px"></div>
<div class="a tip" style="left:42px;top:224px;width:173.5px;height:20.5px;padding-top:5.5px">Browse, manage and select a preset category</div><div class="a ar ard" style="left:125px;top:244.3px"></div>
<div class="a tip" style="left:378px;top:224px;width:131.5px;height:20.5px;padding-top:5.5px">Browse, manage and load presets</div><div class="a ar ard" style="left:439.5px;top:244.3px"></div>
<div class="a tip" style="left:84px;top:380.5px;width:138px;height:20px;padding-top:5.5px">Fast access to your favorite presets</div><div class="a ar ard" style="left:149.5px;top:400.3px"></div>
<div class="a tip" style="left:307px;top:361.8px;width:38px">Record<br>your<br>song</div><div class="a ar ard" style="left:321.5px;top:399px"></div>
<div class="a tip" style="left:351px;top:343.5px;width:48.5px">Waveform<br>editing<br>on<br>individual<br>tracks</div><div class="a ar ard" style="left:371.5px;top:399px"></div>
<div class="a tip" style="left:401.3px;top:316.2px;width:50.2px">Warm up<br>the voice<br>and<br>experiment<br>applying<br>FX over<br>audio<br>demos</div><div class="a ar ard" style="left:423px;top:399px"></div>
<div class="a tip" style="left:454.3px;top:334.5px;width:44.5px">Import<br>song to<br>sing<br>along,<br>removing<br>vocals</div><div class="a ar ard" style="left:473px;top:399px"></div>
<div class="a tip" style="left:502px;top:361.8px;width:48.5px">Setup<br>external<br>controllers</div><div class="a ar ard" style="left:522.5px;top:399px"></div>
<div class="a tip" style="left:552.5px;top:307.2px;width:46.5px">Access<br>settings,<br>purchase<br>additional<br>content<br>and<br>discover<br>new<br>products</div><div class="a ar ard" style="left:572.5px;top:399px"></div>
</div>
</div></body></html>
